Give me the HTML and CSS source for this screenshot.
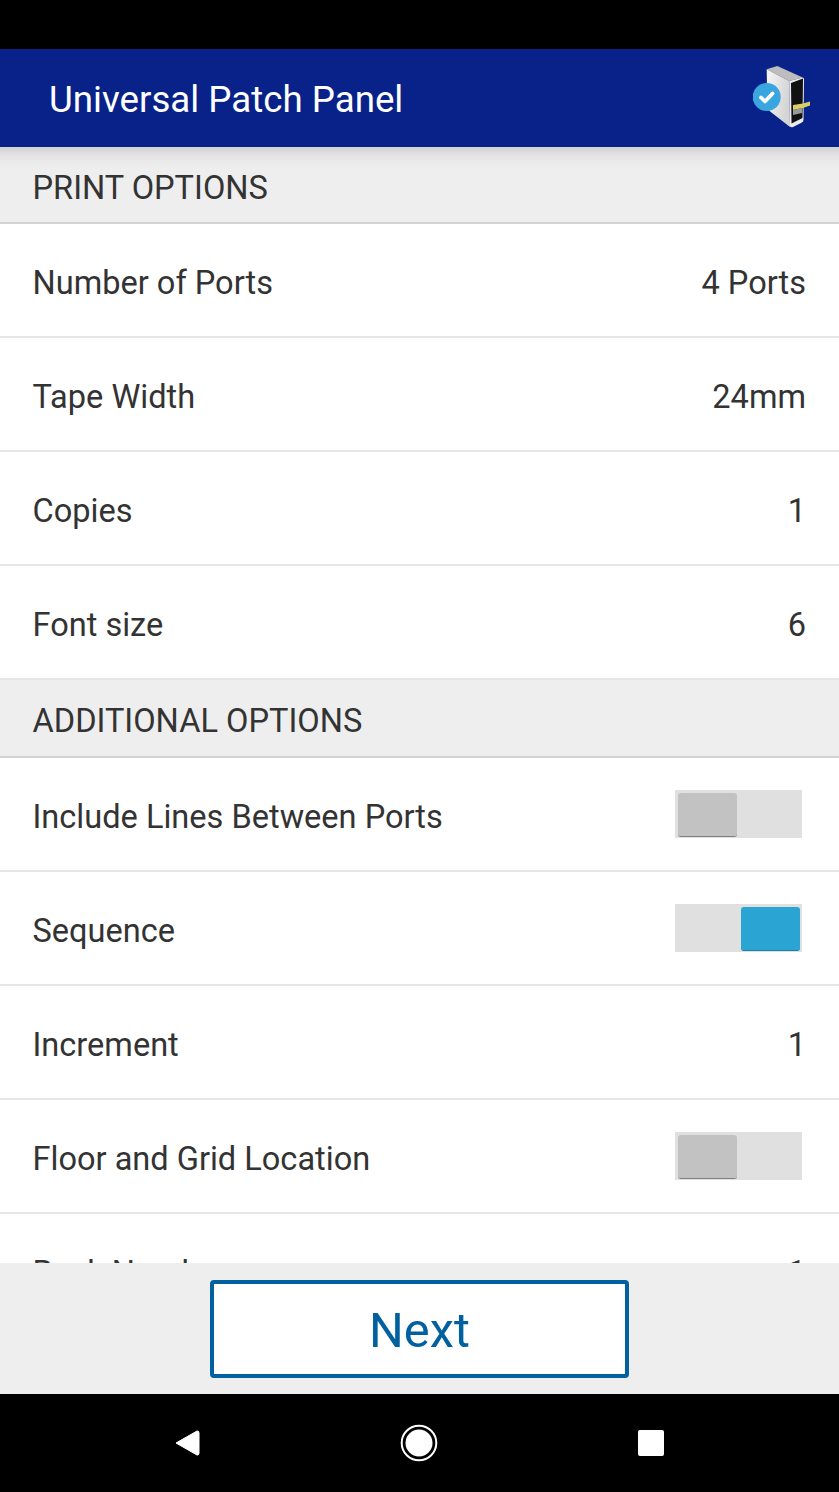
FILE: index.html
```html
<!DOCTYPE html>
<html lang="en">
<head>
<meta charset="utf-8">
<title>Universal Patch Panel</title>
<link rel="stylesheet" href="styles.css">
</head>
<body>
<div class="screen">
  <div class="status"></div>
  <header class="appbar">
    <h1 class="title">Universal Patch Panel</h1>
    <svg class="logo" viewBox="0 0 58 64" width="58" height="64" aria-hidden="true">
      <defs>
        <linearGradient id="side" x1="0" y1="0" x2="1" y2="0.3">
          <stop offset="0" stop-color="#f6f6f6"/>
          <stop offset="1" stop-color="#d4d4d4"/>
        </linearGradient>
      </defs>
      <path d="M13.700 3.300 L24.300 0 L49.700 11.500 L36.300 15 Z" fill="#bdbdbd"/>
      <path d="M13.700 3.300 L36.300 15 L37 61 L14.300 43.300 Z" fill="url(#side)"/>
      <path d="M36.300 15 L49.700 11.500 Q51 11.500 51 13 L50.500 54 Q50.500 56 48 57 L40 61 Q37.500 62 37 60 Z" fill="#ececec"/>
      <path d="M38 17 L50 12.500 L49.500 52 L38.500 57.500 Z" fill="#111"/>
      <path d="M40 39 L50 37.500 L57 35.500 L57 39.500 L50 42 L40 44 Z" fill="#d8cf62"/>
      <path d="M40 44 L49 42 L49 47 L40 49 Z" fill="#9a9a9a"/>
      <circle cx="13.700" cy="31" r="14" fill="#3aa6e0"/>
      <path d="M8 31.500 L12 35.500 L19.500 27.500" fill="none" stroke="#fff" stroke-width="3.800" stroke-linecap="round" stroke-linejoin="round"/>
    </svg>
  </header>
  <main class="content">
    <div class="section first"><span class="txt">PRINT OPTIONS</span></div>
    <div class="row"><span class="txt">Number of Ports</span><span class="txt">4 Ports</span></div>
    <div class="row"><span class="txt">Tape Width</span><span class="txt">24mm</span></div>
    <div class="row"><span class="txt">Copies</span><span class="txt">1</span></div>
    <div class="row"><span class="txt">Font size</span><span class="txt">6</span></div>
    <div class="section"><span class="txt">ADDITIONAL OPTIONS</span></div>
    <div class="row"><span class="txt">Include Lines Between Ports</span><span class="toggle"><span class="thumb"></span></span></div>
    <div class="row"><span class="txt">Sequence</span><span class="toggle on"><span class="thumb"></span></span></div>
    <div class="row"><span class="txt">Increment</span><span class="txt">1</span></div>
    <div class="row"><span class="txt">Floor and Grid Location</span><span class="toggle"><span class="thumb"></span></span></div>
    <div class="row"><span class="txt">Rack Number</span><span class="txt">1</span></div>
  </main>
  <footer class="footer">
    <button class="next" type="button">Next</button>
  </footer>
  <nav class="navbar">
    <svg viewBox="0 0 26 28" width="26" height="28" aria-hidden="true"><path d="M2 14 L23 2 Q25 1.500 25 4 L25 24 Q25 26.500 23 26 Z" fill="#fff" stroke="#fff" stroke-linejoin="round"/></svg>
    <svg viewBox="0 0 38 38" width="38" height="38" aria-hidden="true"><circle cx="19" cy="19" r="17.300" fill="none" stroke="#fff" stroke-width="2"/><circle cx="19" cy="19" r="13.500" fill="#fff"/></svg>
    <span class="square"></span>
  </nav>
</div>
</body>
</html>
```

FILE: styles.css
```css
html, body { margin: 0; padding: 0; }
body { background: #000; font-family: Roboto, "Liberation Sans", sans-serif; }
.screen { width: 839px; height: 1492px; display: flex; flex-direction: column; overflow: hidden; }
.status { height: 49px; background: #000; flex: none; }
.appbar { height: 98px; flex: none; background: #08228a; display: flex; align-items: center; justify-content: space-between; padding: 0 28px 0 49px; position: relative; z-index: 2; }
.title { margin: 0; padding-top: 2px; font-size: 36.700px; font-weight: 400; color: #fff; }
.logo { margin-top: -1px; }
.content { flex: 1; min-height: 0; overflow: hidden; background: #fff; }
.section { height: 76px; background: #eeeeee; border-bottom: 2px solid #d4d4d4; display: flex; align-items: center; padding: 0 33px 0 32.500px; font-size: 32.600px; color: #333; }
.section.first { height: 75px; background: linear-gradient(#d2d2d2 0, #e6e6e6 10px, #eeeeee 22px); }
.row { height: 112px; border-bottom: 2px solid #e6e6e6; display: flex; align-items: center; justify-content: space-between; padding: 0 33px 0 32.500px; font-size: 32.550px; color: #333; background: #fff; }
.txt { padding-top: 6px; }
.toggle { width: 127px; height: 48px; margin-right: 4px; background: #e0e0e0; display: flex; align-items: flex-start; justify-content: flex-start; padding: 3px; box-sizing: border-box; }
.toggle.on { justify-content: flex-end; padding-right: 2px; }
.thumb { width: 59px; height: 44px; border-radius: 3px; background: #c2c2c2; border-bottom: 1px solid #808080; box-sizing: border-box; }
.on .thumb { background: #2aa5d3; border-bottom-color: #1e7ea6; }
.footer { height: 131px; flex: none; background: #eeeeee; display: flex; justify-content: center; padding-top: 17px; box-sizing: border-box; }
.next { width: 419px; height: 98px; box-sizing: border-box; background: #fff; border: 4px solid #0060a0; border-radius: 4px; color: #0060a0; font: 400 48.800px Roboto, "Liberation Sans", sans-serif; padding: 2px 0 0; }
.navbar { height: 98px; flex: none; background: #000; display: grid; grid-template-columns: repeat(3, 232px); justify-content: center; justify-items: center; align-items: center; padding-right: 2px; }
.square { width: 26px; height: 26px; background: #fff; border-radius: 2px; }
```
